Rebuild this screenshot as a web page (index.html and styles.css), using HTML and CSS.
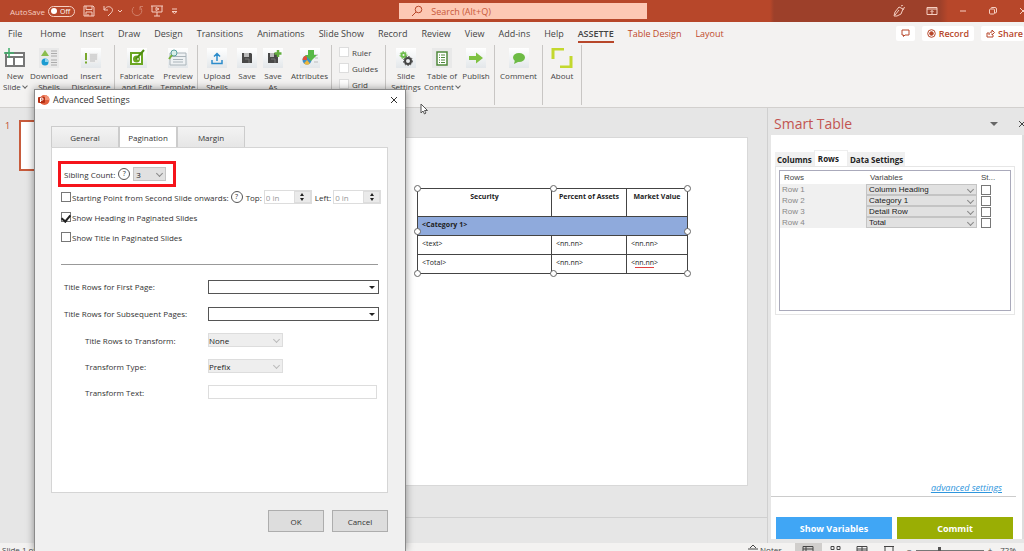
FILE: index.html
```html
<!DOCTYPE html>
<html lang="en">
<head>
    <meta charset="UTF-8" />
    <meta name="viewport" content="width=device-width, initial-scale=1.0" />
    <title>Advanced Settings</title>
    <link rel="stylesheet" href="styles.css">
</head>
<body>
    <header class="titlebar">
        <label class="autosave" for="autosave">AutoSave</label>
        <button class="switch" id="autosave"><i></i>Off</button>
        <div class="quick">
            <svg width="12" height="12" viewBox="0 0 12 12"><path d="M1 1h9l1 1v9H1zM3 1v3.500h6V1M3 11V7h6v4M5 9v2" /></svg>
            <svg width="20" height="12" viewBox="0 0 20 12"><path d="M1 1v4h4M1 5C3 1.500 6 1 8 2.500S10 6 8 8l-3 3M15 5l2 2 2-2" /></svg>
            <svg class="faded" width="12" height="12" viewBox="0 0 12 12"><path d="M3 2a4.800 4.800 0 1 0 6 0M9 5V1.500h3" /></svg>
            <svg width="12" height="12" viewBox="0 0 12 12"><path d="M0 1h12M1 1v6h10V1M6 7v4M3 11h6M5 2.500v3l3-1.500z" /></svg>
            <svg width="7" height="12" viewBox="0 0 7 12"><path d="M1 4h5M1 6.500l2.500 2 2.500-2z" /></svg>
        </div>
        <div class="search">
            <svg width="12" height="12" viewBox="0 0 12 12"><circle cx="7.500" cy="4.500" r="3.300" /><path d="M5 7L1 11" /></svg>
            <input type="text" aria-label="Search" placeholder="Search (Alt+Q)">
        </div>
        <div class="window-icons">
            <svg width="12" height="12" viewBox="0 0 12 12"><path d="M1 11l1-4 4-5 4 2-2 5-4 2zM6 5l-4 5M8 1l2-1M10 5l1.500-3" /></svg>
            <svg width="12" height="12" viewBox="0 0 12 12"><path d="M1 2.500h10v7H1zM1 4h10M6 9V5.500M4.500 7L6 5.500 7.500 7" /></svg>
            <svg width="8" height="12" viewBox="0 0 8 12"><path d="M1 6h6" /></svg>
            <svg width="10" height="12" viewBox="0 0 10 12"><rect x="1.500" y="4" width="5" height="5" rx="1" /><path d="M3 3.500Q3 2.500 4 2.500h3Q8.500 2.500 8.500 4v3Q8.500 8 7 8" /></svg>
            <svg width="8" height="12" viewBox="0 0 8 12"><path d="M1 3l6 6M7 3L1 9" /></svg>
        </div>
    </header>

    <nav class="tabs">
        <a href="#" class="file">File</a>
        <a href="#">Home</a>
        <a href="#">Insert</a>
        <a href="#">Draw</a>
        <a href="#">Design</a>
        <a href="#">Transitions</a>
        <a href="#">Animations</a>
        <a href="#">Slide Show</a>
        <a href="#">Record</a>
        <a href="#">Review</a>
        <a href="#">View</a>
        <a href="#">Add-ins</a>
        <a href="#">Help</a>
        <a href="#" class="active">ASSETTE</a>
        <a href="#" class="context">Table Design</a>
        <a href="#" class="context">Layout</a>
        <div class="share">
            <button aria-label="Comments"><svg width="9" height="9" viewBox="0 0 9 9"><path d="M1 1h7v5H4L2.500 7.500V6H1z" /></svg></button>
            <button><svg width="9" height="9" viewBox="0 0 9 9"><circle cx="4.500" cy="4.500" r="3.800" /><circle class="dot" cx="4.500" cy="4.500" r="1.800" /></svg>Record</button>
            <button class="last"><svg width="9" height="9" viewBox="0 0 9 9"><path d="M3 4H1v4h6V6M3 6c0-2 1-3 3-3V1l2.500 2.500L6 6V4.500" /></svg>Share</button>
        </div>
    </nav>

    <section class="ribbon">
        <div class="group shells">
            <button class="tool">
                <svg width="22" height="20" viewBox="0 0 22 20"><path d="M2 5h18v13H2zM2 9h18M10 9v9" fill="#fff" stroke="#777" stroke-width="2" /><path d="M5 0v10M0 5h10" stroke="#3fae6a" stroke-width="1.500" /></svg>
                <span>New<br>Slide <b class="caret"></b></span>
            </button>
            <button class="tool">
                <svg class="tile grey" width="20" height="20" viewBox="0 0 20 20"><path d="M6 2l4 6H2z" fill="#8bbd4e" /><circle cx="6" cy="14" r="3.500" fill="#1b9bd1" /><path d="M6 14V10.500A3.500 3.500 0 0 1 9.500 14z" fill="#8fd4ef" /><path d="M12 3h6M12 5.500h6M12 8h6M12 12h6M12 14.500h6M12 17h6" stroke="#aaa" /></svg>
                <span>Download<br>Shells</span>
            </button>
            <button class="tool">
                <svg class="tile" width="20" height="20" viewBox="0 0 20 20"><path d="M4 5h2v7H4zM4 13.500h2v2H4z" fill="#78a82c" /><path d="M8 5h9v10H8z" fill="#eee" /><path d="M9 7h7M9 9h7M9 11h7M9 13h5" stroke="#bbb" /></svg>
                <span>Insert<br>Disclosure</span>
            </button>
        </div>
        <div class="group templates">
            <button class="tool">
                <svg class="tile" width="20" height="20" viewBox="0 0 20 20"><path d="M4 5h11v11H4z" fill="#fff" stroke="#6aa622" stroke-width="2" /><circle cx="9.500" cy="11" r="3.500" fill="#6aa622" /><path d="M9 11l8-9" stroke="#4d8c12" stroke-width="2" /><path d="M10 11h2" stroke="#fff" /></svg>
                <span>Fabricate<br>and Edit</span>
            </button>
            <button class="tool">
                <svg class="tile" width="20" height="20" viewBox="0 0 20 20"><path d="M2 5h16v12H2z" fill="#eef1f3" stroke="#aab4ba" /><path d="M2 8.500h16M5 11.500h10M5 14h10" stroke="#aab4ba" /><circle cx="6" cy="5" r="3" fill="#d9efe9" stroke="#5aa0a0" /><path d="M4 7L1 11" stroke="#79b338" stroke-width="2" /></svg>
                <span>Preview<br>Template</span>
            </button>
        </div>
        <div class="group save">
            <button class="tool">
                <svg class="tile" width="20" height="20" viewBox="0 0 20 20"><path d="M10 13V6M7 8.500l3-3 3 3M5 12v3.500h10V12" fill="none" stroke="#2c8ccb" stroke-width="1.500" /></svg>
                <span>Upload<br>Shells</span>
            </button>
            <button class="tool">
                <svg class="tile" width="20" height="20" viewBox="0 0 20 20"><path d="M5 5h9l1 1v9H5z" fill="#484848" /><path d="M7 5h5v4H7z" fill="#bbb" /><path d="M8 11h4v4" stroke="#777" fill="none" /></svg>
                <span>Save</span>
            </button>
            <button class="tool">
                <svg class="tile" width="20" height="20" viewBox="0 0 20 20"><path d="M5 5h9l1 1v9H5z" fill="#484848" /><path d="M7 5h4v4H7z" fill="#bbb" /><path d="M8 11h4v4" stroke="#777" fill="none" /><path d="M15 2v7M11.500 5.500h7" stroke="#63ae3e" stroke-width="2.500" /></svg>
                <span>Save<br>As</span>
            </button>
            <button class="tool">
                <svg class="tile" width="20" height="20" viewBox="0 0 20 20"><circle cx="7" cy="12" r="4.500" fill="#3d8fc7" /><path d="M7 12V7.500A4.500 4.500 0 0 0 2.500 12z" fill="#e0523a" /><path d="M7 12l-3 3.500a4.500 4.500 0 0 0 6 0z" fill="#f0b73c" /><path d="M14 7h4M15 10h3M14 14h4" stroke="#bbb" /><path d="M8 2h6v5h3l-6 6-6-6h3z" fill="#58b947" /></svg>
                <span>Attributes</span>
            </button>
        </div>
        <div class="group checks">
            <label><input type="checkbox"> Ruler</label>
            <label><input type="checkbox"> Guides</label>
            <label><input type="checkbox"> Grid</label>
        </div>
        <div class="group publish">
            <button class="tool">
                <svg class="tile" width="20" height="20" viewBox="0 0 20 20"><g fill="none" stroke-width="2"><circle cx="7.500" cy="7" r="2" stroke="#6ebd4c" /><circle cx="12" cy="13" r="3" stroke="#444" /></g><g fill="none" stroke-dasharray="1.500 1.500"><circle cx="7.500" cy="7" r="3.500" stroke="#6ebd4c" /><circle cx="12" cy="13" r="4.500" stroke="#444" /></g></svg>
                <span>Slide<br>Settings</span>
            </button>
            <button class="tool">
                <svg class="tile grey" width="20" height="20" viewBox="0 0 20 20"><path d="M5 4h10v13H5z" fill="#fff" stroke="#50893c" stroke-width="1.500" /><path d="M7 7h1M9 7h4M7 9.500h1M9 9.500h4M7 12h1M9 12h4M7 14.500h1M9 14.500h4" stroke="#50893c" /></svg>
                <span>Table of<br>Content <b class="caret"></b></span>
            </button>
            <button class="tool">
                <svg class="tile" width="20" height="20" viewBox="0 0 20 20"><path d="M3 8h7V4.500l7 5.500-7 5.500V12H3z" fill="#7fc242" /></svg>
                <span>Publish</span>
            </button>
        </div>
        <div class="group comment">
            <button class="tool">
                <svg class="tile" width="20" height="20" viewBox="0 0 20 20"><ellipse cx="10" cy="9.500" rx="6" ry="4.500" fill="#6dbb45" /><path d="M6 12l-1 4 5-2.500z" fill="#6dbb45" /></svg>
                <span>Comment</span>
            </button>
        </div>
        <div class="group about">
            <button class="tool">
                <svg width="22" height="20" viewBox="0 0 22 20"><path d="M2 11V1h11M20 8v11H9" fill="none" stroke="#c3d82e" stroke-width="3" /></svg>
                <span>About</span>
            </button>
        </div>
    </section>

    <main class="workspace">
        <aside class="thumbs">
            <span>1</span>
            <div class="thumb"></div>
        </aside>
        <section class="editor">
            <div class="slide">
                <div class="selection">
                    <table>
                        <tr class="head"><th>Security</th><th>Percent of Assets</th><th>Market Value</th></tr>
                        <tr class="category"><td colspan="3">&lt;Category 1&gt;</td></tr>
                        <tr><td>&lt;text&gt;</td><td>&lt;nn.nn&gt;</td><td>&lt;nn.nn&gt;</td></tr>
                        <tr><td>&lt;Total&gt;</td><td>&lt;nn.nn&gt;</td><td>&lt;<u>nn.nn</u>&gt;</td></tr>
                    </table>
                    <i class="handle top left"></i>
                    <i class="handle top center"></i>
                    <i class="handle top right"></i>
                    <i class="handle middle left"></i>
                    <i class="handle middle right"></i>
                    <i class="handle bottom left"></i>
                    <i class="handle bottom center"></i>
                    <i class="handle bottom right"></i>
                </div>
            </div>
            <div class="notes"></div>
        </section>
        <aside class="pane">
            <header>
                <h2>Smart Table</h2>
                <b class="triangle"></b>
                <svg width="8" height="8" viewBox="0 0 8 8"><path d="M1 1l6 6M7 1L1 7" /></svg>
            </header>
            <div class="pane-body">
                <div class="pane-tabs">
                    <button>Columns</button>
                    <button class="active">Rows</button>
                    <button>Data Settings</button>
                </div>
                <div class="frame">
                    <div class="grid">
                        <table>
                            <tr><th>Rows</th><th>Variables</th><th>St...</th><th></th></tr>
                            <tr><td>Row 1</td><td><span class="select"><select aria-label="Row 1"><option>Column Heading</option></select></span></td><td><input type="checkbox" aria-label="Row 1"></td></tr>
                            <tr><td>Row 2</td><td><span class="select"><select aria-label="Row 2"><option>Category 1</option></select></span></td><td><input type="checkbox" aria-label="Row 2"></td></tr>
                            <tr><td>Row 3</td><td><span class="select"><select aria-label="Row 3"><option>Detail Row</option></select></span></td><td><input type="checkbox" aria-label="Row 3"></td></tr>
                            <tr><td>Row 4</td><td><span class="select"><select aria-label="Row 4"><option>Total</option></select></span></td><td><input type="checkbox" aria-label="Row 4"></td></tr>
                        </table>
                    </div>
                </div>
                <a class="advanced" href="#">advanced settings</a>
                <div class="pane-buttons">
                    <button class="blue">Show Variables</button>
                    <button class="green">Commit</button>
                </div>
            </div>
        </aside>
    </main>

    <footer class="status">
        <span>Slide 1 of 1</span>
        <div class="view">
            <span class="notes-label"><svg width="10" height="10" viewBox="0 0 10 10"><path d="M2 4l3-3 3 3M0 5h10M0 8h10" /></svg>Notes</span>
            <svg class="on" width="27" height="14" viewBox="0 0 27 14"><path d="M8 3.500h10v8H8zM8 6h10M11 4v8" /></svg>
            <svg width="27" height="14" viewBox="0 0 27 14"><path d="M9 3.500h3v3H9zM15 3.500h3v3h-3zM9 9h3v3H9zM15 9h3v3h-3z" /></svg>
            <svg width="27" height="14" viewBox="0 0 27 14"><path d="M8 3.500h10v8H8zM13 4v8M8 6h10M8 8h10" /></svg>
            <svg width="27" height="14" viewBox="0 0 27 14"><path d="M8 3.500h10M9 4v5h8V4M13 9v3" /></svg>
            <span>−</span>
            <input type="range" aria-label="Zoom" value="35">
            <span>+</span>
            <span>72%</span>
        </div>
    </footer>

    <div class="dialog" role="dialog" aria-labelledby="dialog-title">
        <header>
            <svg width="12" height="12" viewBox="0 0 12 12"><circle cx="6.500" cy="6" r="5" fill="#e2603d" /><path d="M6.500 6V1a5 5 0 0 1 5 5z" fill="#f29478" /><rect x="0" y="3" width="7" height="6" rx="1" fill="#b52f13" /><path d="M2.500 8V4h1.500a1 1 0 0 1 0 2.200H2.500" fill="none" stroke="#fff" /></svg>
            <h1 id="dialog-title">Advanced Settings</h1>
            <button class="close" aria-label="Close"><svg width="8" height="8" viewBox="0 0 8 8"><path d="M1 1l6 6M7 1L1 7" /></svg></button>
        </header>
        <div class="dialog-tabs">
            <button>General</button>
            <button class="active">Pagination</button>
            <button>Margin</button>
        </div>
        <form class="panel">
            <div class="sibling">
                <label for="sibling">Sibling Count:</label>
                <i class="help">?</i>
                <span class="select count"><select id="sibling"><option>3</option></select></span>
            </div>
            <div class="row">
                <input type="checkbox" id="start">
                <label for="start">Starting Point from Second Slide onwards:</label>
                <i class="help">?</i>
                <label class="unit" for="top">Top:</label>
                <span class="spinner"><input type="text" id="top" value="0 in"><b></b></span>
                <label class="unit" for="left">Left:</label>
                <span class="spinner"><input type="text" id="left" value="0 in"><b></b></span>
            </div>
            <div class="row">
                <input type="checkbox" id="heading" checked>
                <label for="heading">Show Heading in Paginated Slides</label>
            </div>
            <div class="row">
                <input type="checkbox" id="title">
                <label for="title">Show Title in Paginated Slides</label>
            </div>
            <hr>
            <div class="field">
                <label for="first">Title Rows for First Page:</label>
                <span class="select combo"><select id="first"><option></option></select></span>
            </div>
            <div class="field">
                <label for="subsequent">Title Rows for Subsequent Pages:</label>
                <span class="select combo"><select id="subsequent"><option></option></select></span>
            </div>
            <div class="field sub">
                <label for="transform">Title Rows to Transform:</label>
                <span class="select short"><select id="transform"><option>None</option></select></span>
            </div>
            <div class="field sub">
                <label for="type">Transform Type:</label>
                <span class="select short"><select id="type"><option>Prefix</option></select></span>
            </div>
            <div class="field sub">
                <label for="text">Transform Text:</label>
                <input type="text" id="text">
            </div>
        </form>
        <div class="dialog-buttons">
            <button>OK</button>
            <button>Cancel</button>
        </div>
    </div>

    <svg class="cursor" width="9" height="12" viewBox="0 0 9 12"><path d="M1 1v9l2-2 1.500 3 1.500-1-1.500-2.500H7.500z" fill="#fff" stroke="#555" /></svg>
</body>
</html>
```
FILE: styles.css
```css
* {
    margin: 0;
    padding: 0;
    box-sizing: border-box;
}

body {
    height: 100vh;
    overflow: hidden;
    position: relative;
    display: flex;
    flex-direction: column;
    background-color: #e6e6e6;
    color: #444;
    font-family: "Open Sans", "Noto Sans", sans-serif;
    font-size: 9px;
    line-height: 11px;
}

button, input, select {
    font: inherit;
    color: inherit;
    border: none;
    background: none;
    border-radius: 0;
}

a {
    color: inherit;
    text-decoration: none;
}

svg {
    flex: none;
    display: block;
}

/* Tick boxes */
input[type="checkbox"] {
    appearance: none;
    flex: none;
    width: 10px;
    height: 10px;
    border: 1px solid #777;
    background-color: white;
}

input[type="checkbox"]:checked::after {
    content: "";
    display: block;
    width: 4px;
    height: 7px;
    margin: 0 auto;
    border: solid #222;
    border-width: 0 2px 2px 0;
    transform: rotate(40deg);
}

/* Title bar */
.titlebar {
    flex: none;
    height: 22px;
    display: flex;
    align-items: center;
    padding-left: 10px;
    color: #f6cfc2;
    background: linear-gradient(90deg, #b7472a 0 770px, #9d402a 774px 940px, #b7472a 948px);
}

.titlebar svg,
.share svg,
.pane header svg,
.close svg,
.status svg {
    fill: none;
    stroke: currentColor;
}

.autosave {
    width: 38px;
    font-size: 8px;
}

.switch {
    display: flex;
    align-items: center;
    gap: 3px;
    width: 27px;
    height: 11px;
    padding-left: 2px;
    border: 1px solid #f6cfc2;
    border-radius: 6px;
    color: white;
    font-size: 7px;
    line-height: 9px;
}

.switch i {
    flex: none;
    width: 6px;
    height: 6px;
    border-radius: 50%;
    background-color: white;
}

.quick {
    display: flex;
    gap: 8px;
    padding-left: 8px;
}

.faded {
    opacity: 0.4;
}

.search {
    position: absolute;
    top: 3px;
    left: 39%;
    width: 248px;
    height: 16px;
    display: flex;
    align-items: center;
    gap: 8px;
    padding-left: 12px;
    background-color: #fdc8b4;
    color: #b7472a;
}

.search input {
    flex: 1;
}

.search input::placeholder {
    color: #c8583a;
}

.window-icons {
    display: flex;
    gap: 21px;
    margin-left: auto;
    margin-right: -3px;
}

/* Ribbon */
.tabs {
    flex: none;
    height: 23px;
    display: flex;
    align-items: center;
    gap: 14px;
    padding-left: 8px;
    background-color: #f3f2f1;
}

.tabs a {
    line-height: 15px;
    border: solid transparent;
    border-width: 2px 0;
    white-space: nowrap;
}

.tabs .file {
    margin-right: 4px;
}

.tabs .active {
    font-weight: 600;
    border-bottom-color: #b7472a;
}

.tabs .context {
    color: #c0482a;
}

.share {
    display: flex;
    gap: 7px;
    margin-left: auto;
    color: #b7472a;
}

.share button {
    height: 15px;
    display: flex;
    align-items: center;
    gap: 3px;
    padding: 0 5px;
    background-color: white;
    border-radius: 2px;
    font-weight: 600;
}

.share .last {
    padding-right: 1px;
}

.dot {
    fill: #b7472a;
}

.ribbon {
    flex: none;
    height: 63px;
    display: flex;
    background-color: #f3f2f1;
    border-bottom: 1px solid #d2d0ce;
}

.group {
    height: 60px;
    display: grid;
    align-items: start;
    padding-top: 3px;
    border-right: 1px solid #c8c6c4;
}

.shells {
    grid-template-columns: 30px 38px 46px;
}

.templates {
    grid-template-columns: 44px 38px;
}

.save {
    grid-template-columns: 38px 22px 30px 43px;
}

.publish {
    grid-template-columns: 40px 32px 36px;
}

.comment {
    grid-template-columns: 47px;
}

.about {
    grid-template-columns: 38px;
}

.tool {
    display: flex;
    flex-direction: column;
    align-items: center;
    gap: 2px;
    white-space: nowrap;
    font-size: 8px;
}

.tile {
    background: linear-gradient(#fff, #e3e7ea);
}

.grey {
    background: #e9e9e9;
}

.caret {
    display: inline-block;
    width: 4px;
    height: 4px;
    border: solid #666;
    border-width: 0 1px 1px 0;
    transform: translateY(-2px) rotate(45deg);
}

.checks {
    width: 54px;
    padding: 2px 0 0 7px;
    align-content: start;
    gap: 5px;
}

.checks label {
    display: flex;
    gap: 3px;
    font-size: 8px;
}

.checks input[type="checkbox"] {
    border-color: #ddd;
}

/* Workspace */
.workspace {
    flex: 1;
    min-height: 0;
    display: flex;
}

.thumbs {
    display: flex;
    width: 60px;
    gap: 9px;
    padding: 12px 0 0 5px;
    color: #c0482a;
}

.thumb {
    width: 90px;
    flex: none;
    height: 51px;
    border: 2px solid #c75b3c;
    background-color: white;
}

.editor {
    flex: 1;
    display: flex;
    flex-direction: column;
    padding-top: 29px;
    background-color: #e6e6e6;
    position: relative;
    border-right: 1px solid #d0d0d0;
}

.slide {
    flex: 1;
    margin: 0 19px 31px 65px;
    padding: 50px 59px 0 0;
    border: 1px solid #d8d8d8;
    background-color: white;
    display: flex;
    align-items: flex-start;
    justify-content: flex-end;
}

.notes {
    height: 26px;
    border-top: 1px solid #d0d0d0;
}

.selection {
    position: relative;
}

.selection table {
    width: 271px;
    table-layout: fixed;
    border-collapse: collapse;
    color: #222;
    font-size: 7px;
    line-height: 9px;
}

.selection th,
.selection td {
    height: 19px;
    padding: 3px 4px;
    border: 1px solid #444;
    vertical-align: top;
    text-align: left;
}

.selection th {
    height: 28px;
    padding: 3px 0;
    text-align: center;
}

.selection th:nth-child(2) {
    width: 75px;
}

.selection th:nth-child(3) {
    width: 61px;
}

.selection .category td {
    background-color: #8faadc;
    font-weight: bold;
}

.selection u {
    text-decoration: none;
    border-bottom: 1px solid #e04040;
}

.handle {
    position: absolute;
    width: 7px;
    height: 7px;
    margin: -3px;
    border: 1px solid #666;
    border-radius: 50%;
    background-color: white;
}

.handle.top {
    top: 0;
}

.handle.middle {
    top: 50%;
}

.handle.bottom {
    bottom: 0;
}

.handle.left {
    left: 0;
}

.handle.center {
    left: 50%;
}

.handle.right {
    right: 0;
}

/* Smart Table pane */
.pane {
    width: 256px;
    display: flex;
    flex-direction: column;
    padding: 0 0 4px 3px;
}

.pane header {
    height: 27px;
    display: flex;
    align-items: center;
    gap: 20px;
    padding: 5px 0 0 3px;
}

.pane h2 {
    margin-right: auto;
    color: #c25450;
    font-size: 14px;
    font-weight: normal;
    line-height: 20px;
}

.pane header svg {
    margin-right: -2px;
}

.triangle {
    border: 4px solid transparent;
    border-top-color: #666;
    border-bottom: none;
}

.pane-body {
    flex: 1;
    display: flex;
    flex-direction: column;
    padding: 15px 7px 0 4px;
    background-color: white;
    border-right: 2px solid #ddd;
}

.pane-tabs {
    display: flex;
    align-items: flex-end;
}

.pane-tabs button {
    height: 14px;
    padding: 0 2px;
    background-color: #f0f0f0;
    color: #222;
    font-size: 8px;
    font-weight: bold;
}

.pane-tabs .active {
    height: 16px;
    padding: 0 8px 0 3px;
    background-color: white;
    border: 1px solid #eee;
    border-bottom: none;
}

.frame {
    padding: 3px;
    border: 1px solid #e6e6e6;
}

.grid {
    height: 141px;
    border: 1px solid #aab;
}

.grid table {
    width: 100%;
    table-layout: fixed;
    border-collapse: collapse;
    font-family: "Liberation Sans", sans-serif;
    font-size: 8px;
    line-height: 11px;
}

.grid th {
    height: 13px;
    padding-left: 4px;
    font-weight: normal;
    text-align: left;
}

.grid th:nth-child(1) {
    width: 86px;
}

.grid th:nth-child(2) {
    width: 111px;
}

.grid th:nth-child(4) {
    width: 12px;
}

.grid td {
    height: 11px;
}

.grid td:first-child {
    padding-left: 2px;
    background-color: #f0f0f0;
    color: #888;
}

.grid td:nth-child(3) {
    padding-left: 4px;
}

.grid input {
    display: block;
}

/* Drop-downs */
.select {
    position: relative;
    display: block;
}

.select select {
    display: block;
    appearance: none;
    width: 100%;
    height: 100%;
    padding-left: 2px;
    background-color: #e1e1e1;
    border: 1px solid #c4c4c4;
    color: #222;
}

.select::after {
    content: "";
    position: absolute;
    top: 50%;
    right: 4px;
    width: 4px;
    height: 4px;
    margin-top: -3px;
    border: solid #888;
    border-width: 0 1px 1px 0;
    transform: rotate(45deg);
    pointer-events: none;
}

.grid .select {
    height: 11px;
}

.grid select {
    line-height: 9px;
}

.advanced {
    margin: auto -1px 0 -4px;
    padding: 0 14px 3px;
    border-bottom: 1px solid #ccc;
    color: #2f96dd;
    font-style: italic;
    text-align: right;
    text-decoration: underline;
}

.pane-buttons {
    display: flex;
    gap: 5px;
    padding: 20px 2px 0 1px;
}

.pane-buttons button {
    flex: 1;
    height: 22px;
    color: white;
    font-weight: bold;
}

.blue {
    background-color: #40a6f5;
}

.green {
    background-color: #9aae04;
}

/* Status bar */
.status {
    flex: none;
    height: 8px;
    display: flex;
    align-items: flex-start;
    justify-content: space-between;
    background-color: #f3f2f1;
    font-size: 8px;
}

.status > span {
    padding: 1px 2px;
}

.view {
    display: flex;
    align-items: flex-start;
    padding-right: 4px;
}

.view span {
    padding: 1px 4px;
}

.view .notes-label {
    display: flex;
    gap: 2px;
    padding-right: 13px;
}

.view .on {
    background-color: #d0cecc;
}

.view input {
    appearance: none;
    width: 68px;
    height: 1px;
    margin-top: 7px;
    background-color: #777;
}

.view input::-webkit-slider-thumb {
    appearance: none;
    width: 3px;
    height: 8px;
    background-color: #555;
}

/* Advanced Settings dialog */
.dialog {
    position: absolute;
    top: 89px;
    bottom: 0;
    left: 34px;
    width: 372px;
    display: flex;
    flex-direction: column;
    background-color: #f0f0f0;
    border: 1px solid #8a8a8a;
    border-bottom: none;
    box-shadow: 0 0 8px rgba(0, 0, 0, 0.4);
    color: #333;
    font-size: 8px;
}

.dialog header {
    height: 19px;
    display: flex;
    align-items: center;
    gap: 3px;
    padding: 0 7px 0 3px;
    background-color: white;
}

.dialog h1 {
    flex: 1;
    font-size: 9px;
    font-weight: normal;
}

.dialog-tabs {
    display: flex;
    padding: 17px 0 0 16px;
}

.dialog-tabs button {
    width: 68px;
    height: 21px;
    border: 1px solid #ccc;
    border-bottom: none;
    background: linear-gradient(#f3f3f3, #e6e6e6);
}

.dialog-tabs .active {
    width: 58px;
    background: white;
}

.panel {
    flex: 1;
    display: flex;
    flex-direction: column;
    align-items: flex-start;
    margin: 0 17px 0 16px;
    padding: 13px 6px 0;
    background-color: white;
    border: 1px solid #d5d5d5;
}

.sibling {
    display: flex;
    align-items: center;
    gap: 3px;
    width: 118px;
    height: 26px;
    padding-left: 3px;
    border: 3px solid #f5141b;
    white-space: nowrap;
}

.help {
    flex: none;
    width: 12px;
    height: 12px;
    border: 1px solid #555;
    border-radius: 50%;
    font-size: 7px;
    font-style: normal;
    line-height: 10px;
    text-align: center;
}

.count {
    width: 33px;
    height: 14px;
}

.row {
    display: flex;
    align-items: center;
    height: 20px;
    padding-left: 3px;
    white-space: nowrap;
}

.row label {
    padding: 0 2px 0 1px;
}

.row .unit {
    padding: 0 2px 0 3px;
}

.spinner {
    display: flex;
    width: 48px;
    height: 14px;
    border: 1px solid #ddd;
    color: #999;
}

.spinner input {
    flex: 1;
    min-width: 0;
    padding-left: 1px;
}

.spinner b {
    width: 17px;
    display: flex;
    flex-direction: column;
    align-items: center;
    justify-content: space-around;
    background-color: #eaeaea;
    border: 1px solid #ddd;
}

.spinner b::before,
.spinner b::after {
    content: "";
    border: 2px solid transparent;
    border-bottom: 3px solid #222;
    border-top: none;
}

.spinner b::after {
    transform: rotate(180deg);
}

hr {
    width: 317px;
    margin: 17px 0 8px 3px;
    border: none;
    border-top: 1px solid #999;
}

.field {
    display: flex;
    align-items: center;
    height: 27px;
    padding-left: 6px;
}

.field label {
    width: 144px;
}

.field.sub {
    height: 26px;
    padding-left: 27px;
}

.sub label {
    width: 123px;
}

.field input {
    width: 169px;
    height: 14px;
    border: 1px solid #ddd;
}

.combo {
    width: 171px;
    height: 14px;
}

.combo select {
    background-color: white;
    border-color: #555;
}

.combo::after {
    width: 0;
    height: 0;
    margin-top: -1px;
    border: 3px solid transparent;
    border-top-color: #222;
    border-bottom: none;
    transform: none;
}

.short {
    width: 75px;
    height: 14px;
}

.short select {
    background-color: #eee;
    border-color: #ddd;
    padding-left: 0;
}

.short::after {
    border-color: #bbb;
}

.dialog-buttons {
    display: flex;
    justify-content: flex-end;
    gap: 8px;
    padding: 17px 17px 19px;
}

.dialog-buttons button {
    width: 56px;
    height: 22px;
    background-color: #ddd;
    border: 1px solid #adadad;
}

.cursor {
    position: absolute;
    top: 103px;
    left: 420px;
}
```
